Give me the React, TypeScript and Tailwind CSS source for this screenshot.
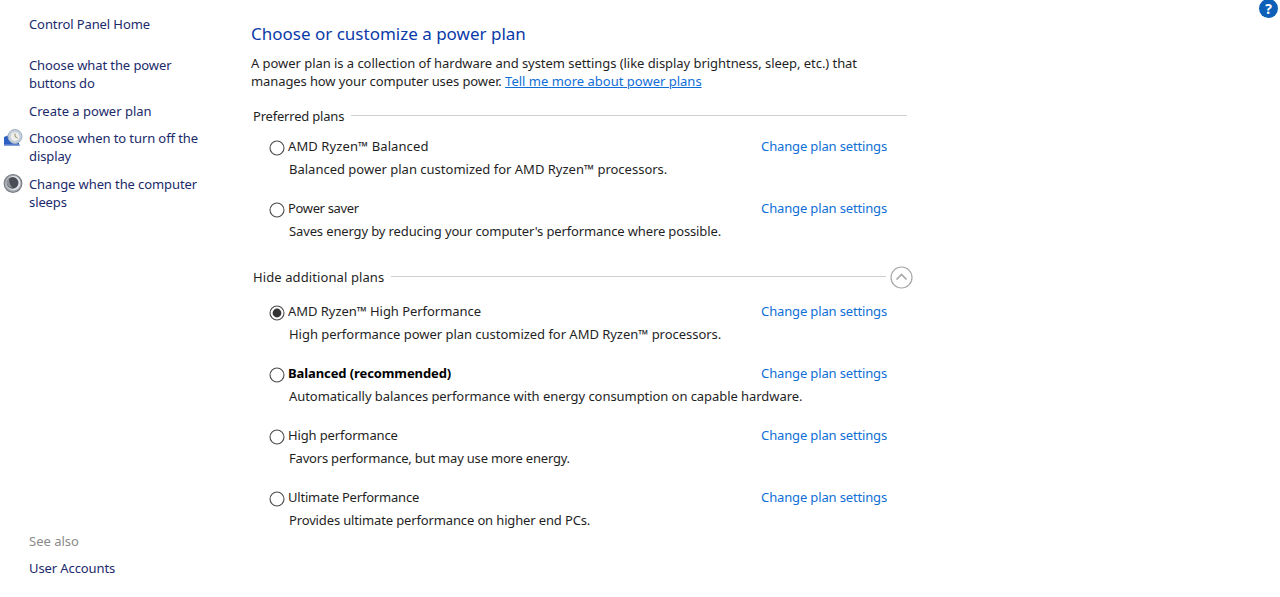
import React from "react";

const font = { fontFamily: '"Noto Sans", sans-serif' };

function Radio({ checked = false }: { checked?: boolean }) {
  return (
    <svg width="16" height="16" viewBox="0 0 16 16" className="mt-[2px] shrink-0">
      <circle cx="8" cy="8" r="7" fill="#fff" stroke="#4a4a4a" strokeWidth="1.1" />
      {checked && <circle cx="8" cy="8" r="4.4" fill="#333" />}
    </svg>
  );
}

function Plan({
  name,
  desc,
  checked,
  bold,
  nameClass = "tracking-[-0.1px]",
  descClass = "",
}: {
  name: string;
  desc: string;
  checked?: boolean;
  bold?: boolean;
  nameClass?: string;
  descClass?: string;
}) {
  return (
    <div className="h-[62px]">
      <div className="flex h-[18px] w-[618px] items-center">
        <Radio checked={checked} />
        <span className={"ml-[3px] flex-1 " + nameClass + " " + (bold ? "font-bold text-black" : "text-[#1f1f1f]")}>{name}</span>
        <a className="tracking-[-0.15px] text-[#0f6fd6]">Change plan settings</a>
      </div>
      <div className={"ml-[20px] mt-[4px] h-[18px] leading-[18px] text-[#1f1f1f] " + descClass}>{desc}</div>
    </div>
  );
}

function SideLink({ children, icon, className = "" }: { children: React.ReactNode; icon?: React.ReactNode; className?: string }) {
  return (
    <div className={"relative leading-[18px] tracking-[-0.1px] text-[#1b2a6b] " + className}>
      {icon && <div className="absolute left-[-26px] top-[-2px]">{icon}</div>}
      {children}
    </div>
  );
}

const ClockIcon = (
  <svg width="20" height="20" viewBox="0 0 20 20">
    <path d="M1 10 L6 8 H16 V19 H1 Z" fill="#2d5fc2" />
    <path d="M1 17.5 H17 V19 H1 Z" fill="#86a0da" />
    <circle cx="12" cy="9.5" r="7" fill="#c4d0de" stroke="#a3b1c2" />
    <circle cx="12" cy="9.5" r="4.9" fill="#eeeeea" stroke="#b4bfcc" strokeWidth="0.6" />
    <path d="M12 6.5 V9.5 L14.5 11" fill="none" stroke="#8a7d66" strokeWidth="0.9" />
  </svg>
);

const MoonIcon = (
  <svg width="20" height="20" viewBox="0 0 20 20">
    <circle cx="10" cy="10.5" r="8.8" fill="#aeb2b9" stroke="#787c84" strokeWidth="1.2" />
    <circle cx="10.5" cy="10" r="6.9" fill="#e4e6ea" />
    <circle cx="9.6" cy="9.8" r="5.9" fill="#4a4d55" />
    <path d="M6.4 5 C5.6 7.6 6.4 11.6 9.4 14.8 C6.4 14.6 3.8 12.4 3.8 9.6 C3.8 7.6 4.8 6 6.4 5 Z" fill="#8f939b" />
  </svg>
);

export default function App() {
  return (
    <div className="flex h-[597px] w-[1280px] overflow-hidden bg-white text-[13px]" style={font}>
      <aside className="flex h-full w-[251px] shrink-0 flex-col pb-[20px] pl-[29px] pt-[15px]">
        <SideLink>Control Panel Home</SideLink>
        <div className="mt-[23px] flex w-[185px] flex-col gap-[10px]">
          <SideLink>Choose what the power buttons do</SideLink>
          <SideLink className="tracking-normal">Create a power plan</SideLink>
          <SideLink icon={ClockIcon} className="mt-[-1px]">Choose when to turn off the display</SideLink>
          <SideLink icon={MoonIcon}>Change when the computer sleeps</SideLink>
        </div>
        <div className="mt-auto leading-[18px] text-[#8a8a8a]">See also</div>
        <div className="mt-[9px]">
          <SideLink>User Accounts</SideLink>
        </div>
      </aside>

      <main className="flex-1 pt-[21px]">
        <h1 className="text-[17px] leading-[26px] text-[#0a3aa8]">Choose or customize a power plan</h1>
        <p className="mt-[7px] w-[640px] leading-[18px] text-[#1f1f1f]">
          <span className="tracking-[-0.05px]">
            A power plan is a collection of hardware and system settings (like display brightness, sleep, etc.) that
          </span>{" "}
          <span className="tracking-[-0.1px]">manages how your computer uses power.</span>{" "}
          <a className="text-[#0f6fd6] underline">Tell me more about power plans</a>
        </p>

        <div className="ml-[2px] mt-[18px] flex h-[18px] w-[654px] items-center gap-[7px] text-[#1f1f1f]">
          <span className="tracking-[-0.2px]">Preferred plans</span>
          <div className="mt-[-3px] h-px flex-1 bg-[#cfcfcf]" />
        </div>

        <div className="ml-[18px] mt-[12px]">
          <Plan nameClass="tracking-[0.1px]" name="AMD Ryzen™ Balanced" desc="Balanced power plan customized for AMD Ryzen™ processors." />
          <Plan nameClass="tracking-[-0.35px]" descClass="tracking-[-0.13px]" name="Power saver" desc="Saves energy by reducing your computer's performance where possible." />
        </div>

        <div className="ml-[2px] mt-[7px] flex h-[18px] w-[660px] items-center gap-[7px] text-[#1f1f1f]">
          <span className="tracking-[0.1px]">Hide additional plans</span>
          <div className="mt-[-4px] h-px flex-1 bg-[#cfcfcf]" />
          <svg width="23" height="23" viewBox="0 0 23 23" className="ml-[-3px] mt-[-2px] shrink-0">
            <circle cx="11.5" cy="11.5" r="10.5" fill="#fff" stroke="#a8a8a8" strokeWidth="1.2" />
            <path d="M6.5 13.5 L11.5 8.5 L16.5 13.5" fill="none" stroke="#a8a8a8" strokeWidth="1.6" />
          </svg>
        </div>

        <div className="ml-[18px] mt-[16px]">
          <Plan checked nameClass="tracking-[-0.05px]" descClass="tracking-[-0.03px]" name="AMD Ryzen™ High Performance" desc="High performance power plan customized for AMD Ryzen™ processors." />
          <Plan bold descClass="tracking-[-0.06px]" name="Balanced (recommended)" desc="Automatically balances performance with energy consumption on capable hardware." />
          <Plan nameClass="tracking-[-0.13px]" descClass="tracking-[-0.2px]" name="High performance" desc="Favors performance, but may use more energy." />
          <Plan nameClass="tracking-[-0.2px]" descClass="tracking-[-0.14px]" name="Ultimate Performance" desc="Provides ultimate performance on higher end PCs." />
        </div>
      </main>

      <div className="absolute left-[1259px] top-[-1px] flex h-[19px] w-[19px] items-center justify-center rounded-full bg-[#0d5fb8] text-[14px] font-bold text-white">
        ?
      </div>
    </div>
  );
}
